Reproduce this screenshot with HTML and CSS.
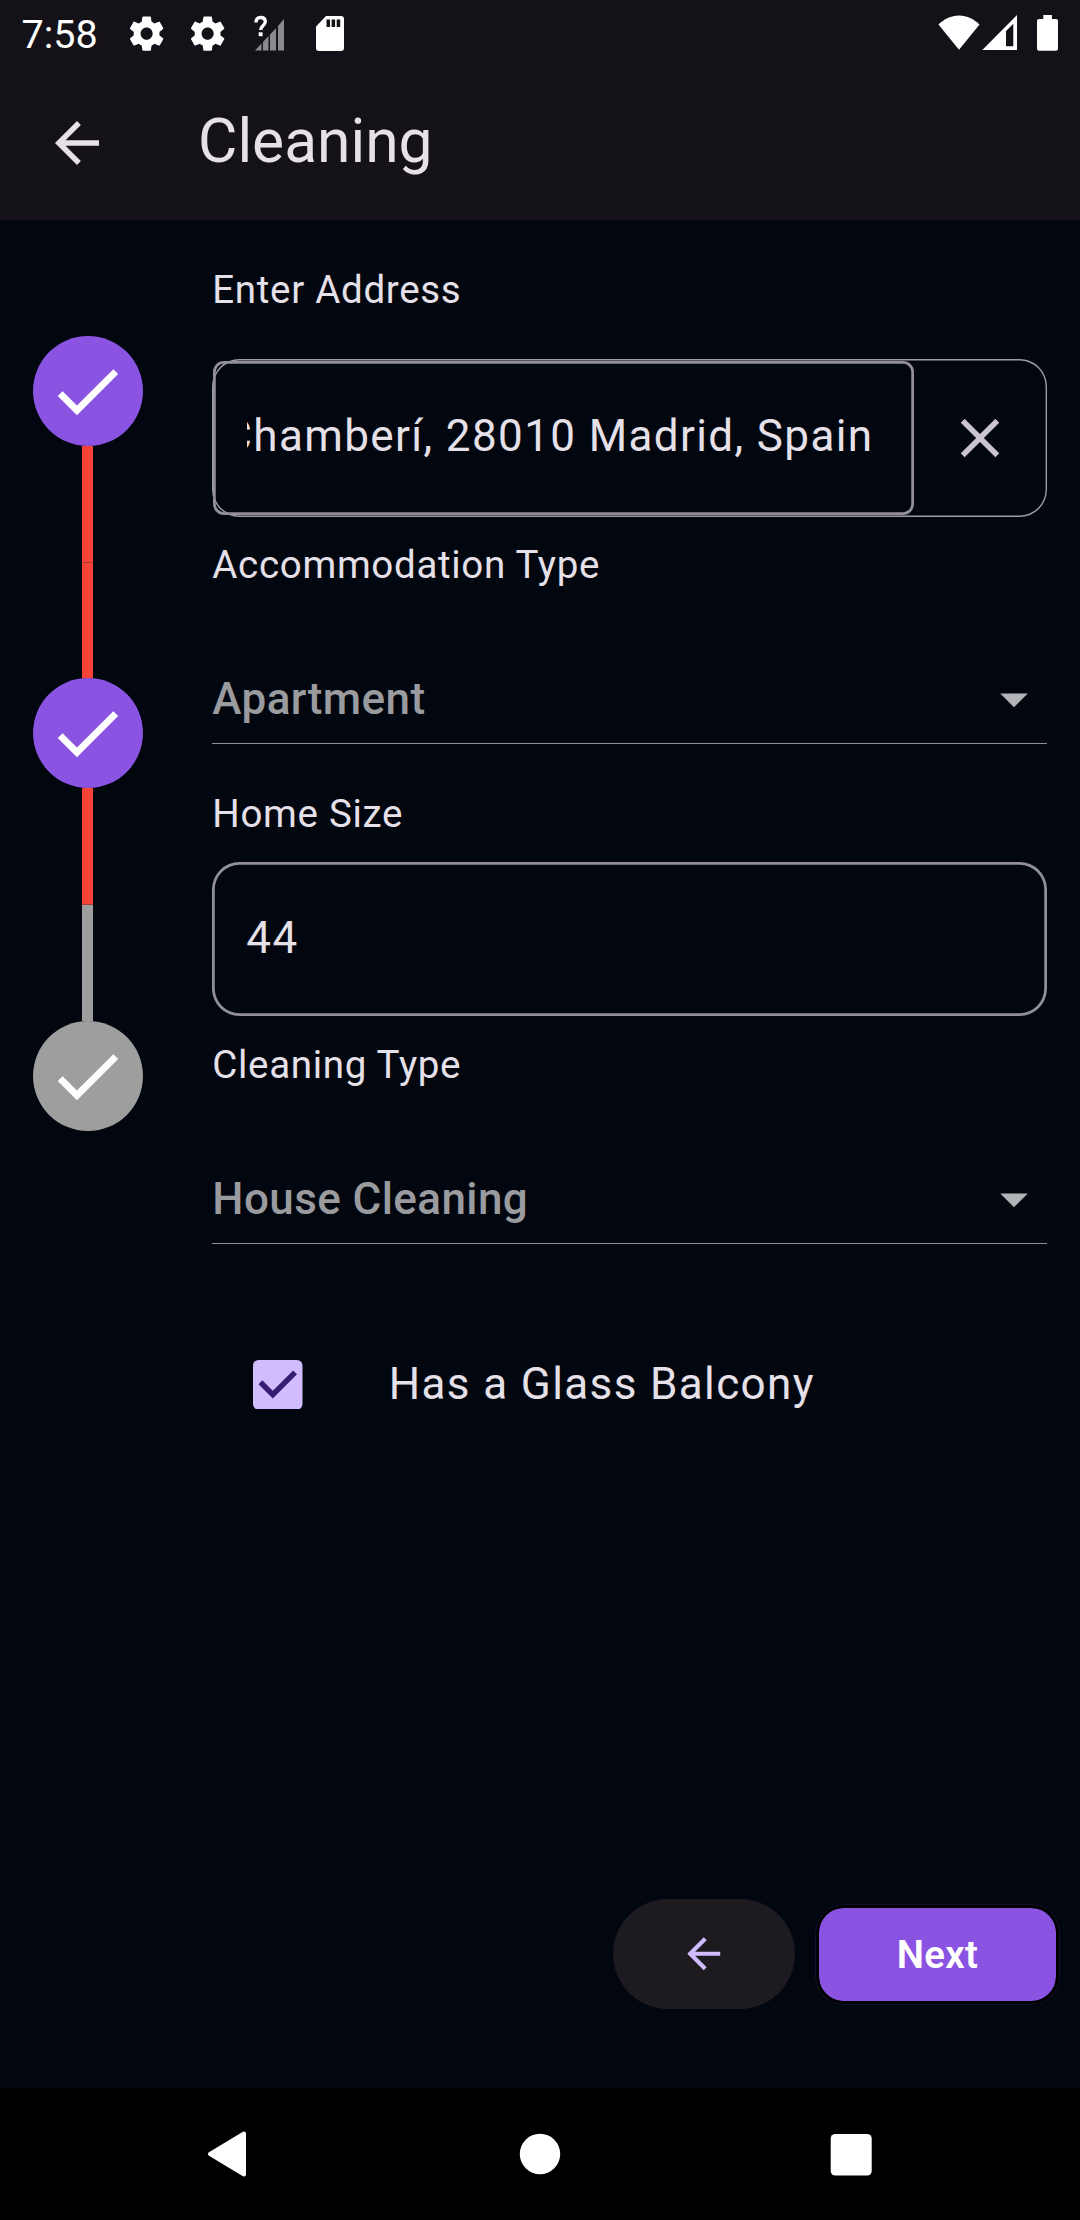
FILE: index.html
```
<!DOCTYPE html>
<html lang="en">
<head>
<meta charset="utf-8">
<title>Cleaning</title>
<link rel="stylesheet" href="styles.css">
</head>
<body>
<div class="screen">
  <header class="top">
    <div class="status">
      <span class="clock">7:58</span>
      <svg class="gear" viewBox="0 0 24 24"><path d="M19.43 12.98c.04-.32.07-.64.07-.98s-.03-.66-.07-.98l2.11-1.65c.19-.15.24-.42.12-.64l-2-3.46c-.12-.22-.39-.3-.61-.22l-2.49 1c-.52-.4-1.08-.73-1.69-.98l-.38-2.65C14.46 2.18 14.25 2 14 2h-4c-.25 0-.46.18-.49.42l-.38 2.65c-.61.25-1.17.59-1.69.98l-2.49-1c-.23-.09-.49 0-.61.22l-2 3.46c-.13.22-.07.49.12.64l2.11 1.65c-.04.32-.07.65-.07.98s.03.66.07.98l-2.11 1.65c-.19.15-.24.42-.12.64l2 3.46c.12.22.39.3.61.22l2.49-1c.52.4 1.08.73 1.69.98l.38 2.65c.03.24.24.42.49.42h4c.25 0 .46-.18.49-.42l.38-2.65c.61-.25 1.17-.59 1.69-.98l2.49 1c.23.09.49 0 .61-.22l2-3.46c.12-.22.07-.49-.12-.64l-2.11-1.65zM12 15.5c-1.93 0-3.5-1.57-3.5-3.5s1.57-3.5 3.5-3.5 3.5 1.57 3.5 3.5-1.57 3.5-3.5 3.5z"/></svg>
      <svg class="gear gear-second" viewBox="0 0 24 24"><path d="M19.43 12.98c.04-.32.07-.64.07-.98s-.03-.66-.07-.98l2.11-1.65c.19-.15.24-.42.12-.64l-2-3.46c-.12-.22-.39-.3-.61-.22l-2.49 1c-.52-.4-1.08-.73-1.69-.98l-.38-2.65C14.46 2.18 14.25 2 14 2h-4c-.25 0-.46.18-.49.42l-.38 2.65c-.61.25-1.17.59-1.69.98l-2.49-1c-.23-.09-.49 0-.61.22l-2 3.46c-.13.22-.07.49.12.64l2.11 1.65c-.04.32-.07.65-.07.98s.03.66.07.98l-2.11 1.65c-.19.15-.24.42-.12.64l2 3.46c.12.22.39.3.61.22l2.49-1c.52.4 1.08.73 1.69.98l.38 2.65c.03.24.24.42.49.42h4c.25 0 .46-.18.49-.42l.38-2.65c.61-.25 1.17-.59 1.69-.98l2.49 1c.23.09.49 0 .61-.22l2-3.46c.12-.22.07-.49-.12-.64l-2.11-1.65zM12 15.5c-1.93 0-3.5-1.57-3.5-3.5s1.57-3.5 3.5-3.5 3.5 1.57 3.5 3.5-1.57 3.5-3.5 3.5z"/></svg>
      <svg class="no-signal" viewBox="0 0 32 36"><path class="bars" d="M1 35.5 7.5 28.6V35.500zM9 27l5.500-6v14.500H9zM16 19.500l6-6.300v22.300H16zM24 11l6-7v31.500h-6z"/><path class="mark" d="M2 7.500c0-3.300 1.900-5 4.700-5s4.600 1.700 4.600 4.300c0 3.600-4.600 4-4.600 8.200"/><path d="M4.700 17.300h3.900v3.900H4.700z"/></svg>
      <svg class="sd" viewBox="0 0 28 35"><path d="M10 0h15a3 3 0 0 1 3 3v29a3 3 0 0 1-3 3H3a3 3 0 0 1-3-3V10.500z"/><path class="pins" d="M10.500 3.500H14v7.500h-3.500zM15.600 3.500h3.500v7.500h-3.500zM20.700 3.500h3.500v7.500h-3.500z"/></svg>
      <svg class="wifi" viewBox="0 0 42 36"><path d="M.5 9.500C6 4.300 13 .5 21 .5s15 3.800 20.500 9L21 34.800z"/></svg>
      <svg class="cell" viewBox="0 0 36 36"><path fill-rule="evenodd" d="M35 0v35H.3zM24 16v15.300h7.300V8.800z"/></svg>
      <svg class="battery" viewBox="0 0 21 36"><path d="M6.300 0h8.600v4H19a2 2 0 0 1 2 2v27.700a2 2 0 0 1-2 2H2a2 2 0 0 1-2-2V6a2 2 0 0 1 2-2h4.300z"/></svg>
    </div>
    <div class="appbar">
      <svg class="nav-back" viewBox="0 0 24 24"><path d="M20 11H7.830l5.590-5.590L12 4l-8 8 8 8 1.410-1.410L7.830 13H20v-2z"/></svg>
      <h1 class="title">Cleaning</h1>
    </div>
  </header>

  <main class="content">
    <div class="stepper">
      <div class="step done"><svg viewBox="0 0 24 24"><path d="M9 16.170 4.830 12l-1.420 1.410L9 19 21 7l-1.410-1.410z"/></svg></div>
      <div class="line"><span class="half red"></span><span class="half red"></span></div>
      <div class="step done"><svg viewBox="0 0 24 24"><path d="M9 16.170 4.830 12l-1.420 1.410L9 19 21 7l-1.410-1.410z"/></svg></div>
      <div class="line"><span class="half red"></span><span class="half"></span></div>
      <div class="step"><svg viewBox="0 0 24 24"><path d="M9 16.170 4.830 12l-1.420 1.410L9 19 21 7l-1.410-1.410z"/></svg></div>
    </div>
    <div class="form">
      <div class="label">Enter Address</div>
      <div class="address">
        <div class="address-field"><div class="address-text">Chamberí, 28010 Madrid, Spain</div></div>
        <svg class="clear" viewBox="0 0 24 24"><path d="M19 6.410 17.590 5 12 10.590 6.410 5 5 6.410 10.590 12 5 17.590 6.410 19 12 13.410 17.590 19 19 17.590 13.410 12z"/></svg>
      </div>
      <div class="label label-type">Accommodation Type</div>
      <div class="select"><span>Apartment</span><svg viewBox="0 0 24 24"><path d="M7 10l5 5 5-5z"/></svg></div>
      <div class="label label-size">Home Size</div>
      <div class="input">44</div>
      <div class="label label-cleaning">Cleaning Type</div>
      <div class="select"><span>House Cleaning</span><svg viewBox="0 0 24 24"><path d="M7 10l5 5 5-5z"/></svg></div>
      <div class="option">
        <svg class="checkbox" viewBox="0 0 18 18"><rect width="18" height="18" rx="2"/><path d="M2.700 8.100 7.200 12.600 15.300 4.500"/></svg>
        <span>Has a Glass Balcony</span>
      </div>
    </div>
  </main>

  <div class="actions">
    <div class="prev"><svg viewBox="0 0 24 24"><path d="M20 11H7.830l5.590-5.590L12 4l-8 8 8 8 1.410-1.410L7.830 13H20v-2z"/></svg></div>
    <div class="next">Next</div>
  </div>

  <nav class="system-nav">
    <svg viewBox="0 0 48 48"><path class="tri" d="M7 24 41 3.500v41z"/></svg>
    <svg viewBox="0 0 48 48"><circle cx="24" cy="24" r="20.200"/></svg>
    <svg viewBox="0 0 48 48"><rect x="3.700" y="4" width="41" height="41.500" rx="4.500"/></svg>
  </nav>
</div>
</body>
</html>
```
FILE: styles.css
```
* { box-sizing: border-box; }
body { margin: 0; background: #02060f; }
svg { display: block; flex: none; }

.screen {
  display: flex;
  flex-direction: column;
  width: 1080px;
  height: 2220px;
  overflow: hidden;
  background: #02060f;
  color: #e6e0e9;
  font-family: Roboto, "Liberation Sans", sans-serif;
}

/* Status bar and app bar */
.top { flex: none; height: 220px; background: #141218; }
.status {
  display: flex;
  align-items: flex-start;
  height: 66px;
  padding: 15px 22px 0 21.500px;
  fill: #fff;
  color: #fff;
}
.clock { width: 104px; margin-top: -2px; font-size: 39.5px; line-height: 44px; }
.gear { width: 41.250px; height: 41.250px; margin-top: -2.500px; }
.gear-second { margin-left: 20px; }
.no-signal { width: 32px; height: 36px; margin-left: 25.500px; }
.bars { fill: #8b8a8d; }
.mark { fill: none; stroke: #fff; stroke-width: 3.300; }
.sd { width: 28px; height: 35px; margin: 1px 0 0 30px; }
.pins { fill: #141218; }
.wifi { width: 42px; height: 36px; margin-left: auto; }
.cell { width: 36px; height: 36px; margin-left: 2px; }
.battery { width: 21px; height: 36px; margin-left: 19px; }

.appbar { display: flex; align-items: center; height: 154px; padding-left: 44px; }
.nav-back { width: 66px; height: 66px; fill: #e6e0e9; }
.title { margin: 0 0 3px 88px; font-size: 60.500px; font-weight: 400; line-height: 76px; }

.content { display: flex; flex: 1; }

/* Stepper */
.stepper { display: flex; flex-direction: column; align-items: center; width: 175px; padding-top: 116px; }
.step {
  display: flex;
  align-items: center;
  justify-content: center;
  flex: none;
  width: 110px;
  height: 110px;
  border-radius: 50%;
  background: #9e9e9e;
}
.step svg { width: 82.500px; height: 82.500px; fill: #fff; }
.step.done { background: #8b53e1; }
.line { display: flex; flex-direction: column; width: 11px; height: 232.400px; flex: none; }
.half { flex: 1; background: #9e9e9e; }
.half.red { background: #f74336; }
.half + .half { border-top: 1px solid #a53b38; }

/* Form */
.form { width: 835px; margin-left: 37.300px; padding-top: 42px; }
.label { font-size: 38.500px; letter-spacing: .690px; line-height: 56px; }
.label-type { margin-top: 20px; }
.label-size { margin-top: 42px; }
.label-cleaning { margin-top: 21px; }

.address {
  display: flex;
  align-items: center;
  height: 157.500px;
  margin-top: 41px;
  padding-left: 1.200px;
  border-radius: 27.500px;
  box-shadow: inset 0 0 0 1.400px #9e9e9e;
}
.address-field {
  width: 700.500px;
  height: 154.500px;
  padding: 45px 40.500px 0 34px;
  border-radius: 11px;
  box-shadow: inset 0 0 0 2.750px #938f99;
}
.address-text {
  display: flex;
  justify-content: flex-end;
  overflow: hidden;
  font-size: 44px;
  letter-spacing: 1.375px;
  line-height: 60px;
  white-space: nowrap;
}
.clear { width: 66px; height: 66px; margin-left: 33px; fill: #cac4d0; }

.select {
  display: flex;
  align-items: flex-start;
  justify-content: space-between;
  height: 78px;
  margin-top: 73px;
  border-bottom: 1px solid #8f8f93;
  color: #9a9b9f;
  font-size: 44px;
  font-weight: 500;
  letter-spacing: .410px;
  line-height: 66px;
}
.select svg { width: 66px; height: 66px; margin-top: .500px; fill: #b3b4b7; }

.input {
  height: 154px;
  margin-top: 20px;
  padding-left: 34px;
  border-radius: 27.500px;
  box-shadow: inset 0 0 0 2.750px #938f99;
  font-size: 44px;
  letter-spacing: 1.375px;
  line-height: 152px;
}

.option {
  display: flex;
  align-items: center;
  height: 66px;
  margin-top: 108px;
  padding-left: 41px;
  font-size: 44px;
  letter-spacing: 1.375px;
  line-height: 62px;
}
.option span { margin: 0 0 1px 86px; }
.checkbox { width: 49.500px; height: 49.500px; fill: #d0bcff; }
.checkbox path { fill: none; stroke: #381e72; stroke-width: 2; }

/* Step buttons */
.actions {
  display: flex;
  align-items: center;
  justify-content: flex-end;
  gap: 21px;
  flex: none;
  height: 110px;
  margin-bottom: 79px;
  padding-right: 21px;
}
.prev {
  display: flex;
  align-items: center;
  justify-content: center;
  width: 182px;
  height: 110px;
  border-radius: 55px;
  background: #1d1b20;
}
.prev svg { width: 49.500px; height: 49.500px; fill: #d0bcff; }
.next {
  width: 243px;
  height: 99px;
  border: 3px solid #000;
  border-radius: 27.500px;
  background: #8b53e1;
  background-clip: padding-box;
  box-shadow: 0 0 0 .5px #2b1b48;
  color: #fff;
  font-size: 38.500px;
  font-weight: 600;
  letter-spacing: .275px;
  line-height: 94px;
  text-align: center;
}

/* System navigation */
.system-nav {
  display: flex;
  align-items: flex-start;
  justify-content: space-between;
  flex: none;
  height: 132px;
  padding: 42px 205px 0 203px;
  background: #000;
  fill: #fff;
}
.system-nav svg { width: 48px; height: 48px; }
.system-nav svg:nth-child(2) { margin-left: 2px; }
.tri { stroke: #fff; stroke-width: 4; stroke-linejoin: round; }
```
